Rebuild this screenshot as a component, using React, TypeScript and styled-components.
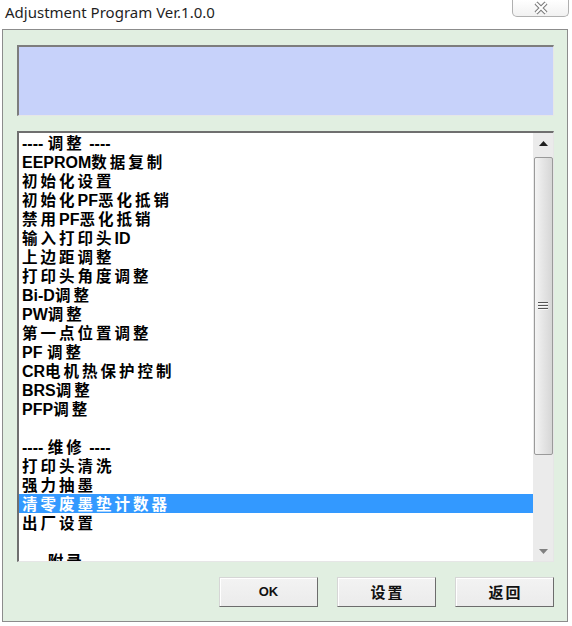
import React from "react";
import styled, { createGlobalStyle } from "styled-components";

const Global = createGlobalStyle`
  html, body { margin: 0; padding: 0; background: #ffffff; }
  * { box-sizing: border-box; }
`;

const Window = styled.div`
  width: 572px;
  height: 626px;
  background: #ffffff;
  display: flex;
  flex-direction: column;
  overflow: hidden;
`;

const TitleBar = styled.div`
  height: 29px;
  display: flex;
  justify-content: space-between;
  align-items: flex-start;
  flex-shrink: 0;
`;

const Title = styled.div`
  padding: 2px 0 0 5px;
  font-family: "Noto Sans", "Open Sans", sans-serif;
  font-size: 15px;
  line-height: 20px;
  color: #1f1f1f;
`;

const CloseButton = styled.div`
  width: 57px;
  height: 17px;
  margin-right: 3px;
  border: 1px solid #b0b0b0;
  border-top: none;
  border-radius: 0 0 5px 5px;
  background: linear-gradient(#ffffff, #f1f1f1);
  display: flex;
  align-items: center;
  justify-content: center;
`;

const Panel = styled.div`
  margin: 0 0 4px 2px;
  width: 566px;
  height: 593px;
  border: 1px solid #8c8c8c;
  background: #e1efe1;
  padding: 15px 13px 14px 14px;
  display: flex;
  flex-direction: column;
`;

const InfoBox = styled.div`
  height: 71px;
  background: #c7d2fa;
  border-style: solid;
  border-width: 2px 1px 1px 2px;
  border-color: #7d7d7d #e6e6e6 #e6e6e6 #7d7d7d;
  flex-shrink: 0;
`;

const ListBox = styled.div`
  margin-top: 15px;
  height: 431px;
  background: #ffffff;
  border-style: solid;
  border-width: 2px 1px 1px 2px;
  border-color: #6f6f6f #e6e6e6 #e6e6e6 #6f6f6f;
  display: flex;
  flex-shrink: 0;
`;

const Rows = styled.div`
  flex: 1;
  overflow: hidden;
`;

const Row = styled.div<{ $selected?: boolean }>`
  height: 19px;
  line-height: 19px;
  padding-left: 3px;
  white-space: nowrap;
  font-family: "Liberation Sans", Arial, "Noto Sans CJK SC", sans-serif;
  font-weight: 700;
  font-size: 16px;
  color: ${(p) => (p.$selected ? "#ffffff" : "#000000")};
  background: ${(p) => (p.$selected ? "#3399ff" : "transparent")};
`;

const Cjk = styled.span`
  font-family: "Noto Sans CJK SC", sans-serif;
  font-weight: 700;
  font-size: 15.5px;
  letter-spacing: 3px;
`;

const ScrollTrack = styled.div`
  width: 20px;
  background: #ebebeb;
  display: flex;
  flex-direction: column;
  align-items: center;
`;

const ArrowBox = styled.div`
  height: 20px;
  width: 100%;
  display: flex;
  align-items: center;
  justify-content: center;
  flex-shrink: 0;
`;

const Thumb = styled.div`
  margin-top: 4px;
  width: 19px;
  height: 298px;
  border: 1px solid #9a9a9a;
  border-radius: 2px;
  background: linear-gradient(to right, #f4f4f4, #e6e6e6 45%, #d6d6d6);
  display: flex;
  align-items: center;
  justify-content: center;
`;

const Spacer = styled.div`
  flex: 1;
`;

const ButtonRow = styled.div`
  margin-top: 15px;
  display: flex;
  justify-content: flex-end;
  gap: 19px;
`;

const Button = styled.div`
  width: 99px;
  height: 30px;
  background: linear-gradient(#f3f3f3, #ebebeb);
  border: 1px solid;
  border-color: #d6d6d6 #6c6c6c #6c6c6c #d6d6d6;
  box-shadow: inset 1px 1px 0 #ffffff;
  display: flex;
  align-items: center;
  justify-content: center;
  padding-bottom: 2px;
  font-family: "Liberation Sans", Arial, sans-serif;
  font-weight: 700;
  font-size: 13px;
  color: #111111;
`;

const BtnCjk = styled.span`
  font-family: "Noto Sans CJK SC", sans-serif;
  font-weight: 700;
  font-size: 15px;
  letter-spacing: 2px;
  margin-right: -2px;
`;

const isCjk = /[\u3000-\u9fff\uff00-\uffef]/;

function renderText(s: string) {
  const parts = s.split(/([\u3000-\u9fff\uff00-\uffef]+)/).filter((x) => x.length);
  return parts.map((p, i) =>
    isCjk.test(p) ? <Cjk key={i}>{p}</Cjk> : <React.Fragment key={i}>{p}</React.Fragment>
  );
}

const items: string[] = [
  "---- 调整 ----",
  "EEPROM数据复制",
  "初始化设置",
  "初始化PF恶化抵销",
  "禁用PF恶化抵销",
  "输入打印头ID",
  "上边距调整",
  "打印头角度调整",
  "Bi-D调整",
  "PW调整",
  "第一点位置调整",
  "PF 调整",
  "CR电机热保护控制",
  "BRS调整",
  "PFP调整",
  "",
  "---- 维修 ----",
  "打印头清洗",
  "强力抽墨",
  "清零废墨垫计数器",
  "出厂设置",
  "",
  "---- 附录 ----",
];

const SELECTED = 19;

const CloseIcon = () => (
  <svg width="18" height="14" viewBox="0 0 18 14">
    <path d="M4 2 L14 12 M14 2 L4 12" stroke="#7c7c7c" strokeWidth="4.2" fill="none" />
    <path d="M4 2 L14 12 M14 2 L4 12" stroke="#ffffff" strokeWidth="2" fill="none" />
  </svg>
);

const UpArrow = () => (
  <svg width="9" height="5" viewBox="0 0 9 5">
    <path d="M0 5 L4.5 0 L9 5 Z" fill="#202020" />
  </svg>
);

const DownArrow = () => (
  <svg width="9" height="5" viewBox="0 0 9 5">
    <path d="M0 0 L9 0 L4.5 5 Z" fill="#808080" />
  </svg>
);

const Grip = () => (
  <svg width="10" height="8" viewBox="0 0 10 8">
    <path d="M0 0.5 H10 M0 3.5 H10 M0 6.5 H10" stroke="#555555" strokeWidth="1" />
    <path d="M0 1.5 H10 M0 4.5 H10 M0 7.5 H10" stroke="#f8f8f8" strokeWidth="1" />
  </svg>
);

export default function App() {
  return (
    <>
      <Global />
      <Window>
        <TitleBar>
          <Title>Adjustment Program Ver.1.0.0</Title>
          <CloseButton>
            <CloseIcon />
          </CloseButton>
        </TitleBar>
        <Panel>
          <InfoBox />
          <ListBox>
            <Rows>
              {items.map((t, i) => (
                <Row key={i} $selected={i === SELECTED}>
                  {t ? renderText(t) : "\u00a0"}
                </Row>
              ))}
            </Rows>
            <ScrollTrack>
              <ArrowBox>
                <UpArrow />
              </ArrowBox>
              <Thumb>
                <Grip />
              </Thumb>
              <Spacer />
              <ArrowBox>
                <DownArrow />
              </ArrowBox>
            </ScrollTrack>
          </ListBox>
          <ButtonRow>
            <Button>OK</Button>
            <Button>
              <BtnCjk>设置</BtnCjk>
            </Button>
            <Button>
              <BtnCjk>返回</BtnCjk>
            </Button>
          </ButtonRow>
        </Panel>
      </Window>
    </>
  );
}
